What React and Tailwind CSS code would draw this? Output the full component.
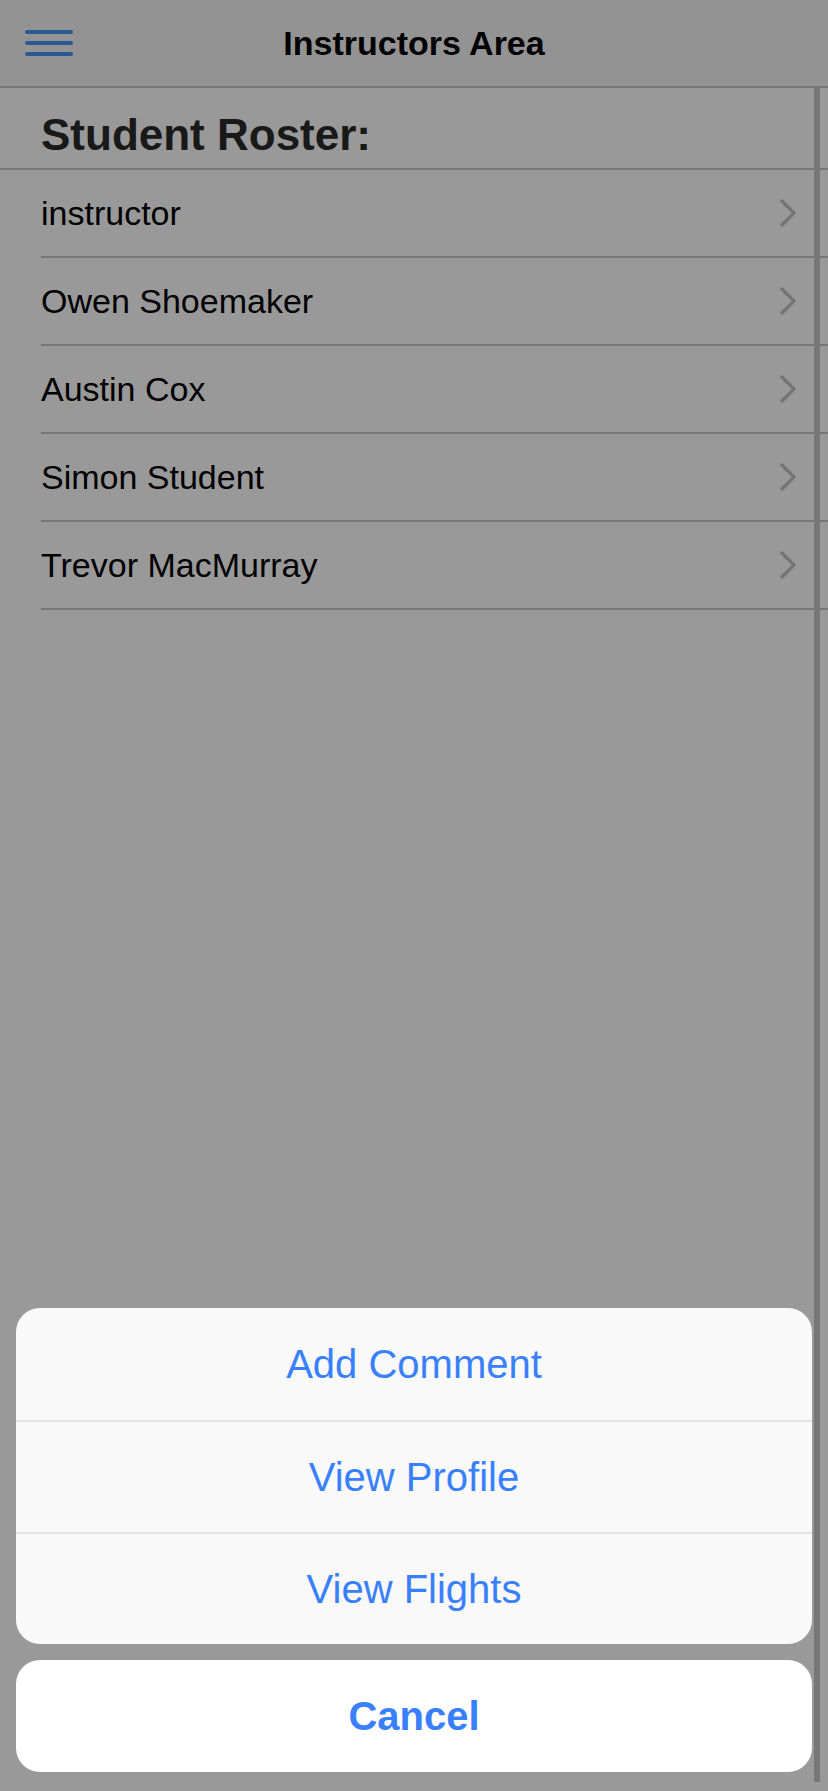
import React from 'react';

const STUDENTS = ['instructor', 'Owen Shoemaker', 'Austin Cox', 'Simon Student', 'Trevor MacMurray'];

const ACTIONS = ['Add Comment', 'View Profile', 'View Flights'];

function Chevron() {
  return (
    <svg width="16" height="28" viewBox="0 0 16 28" fill="none">
      <polyline points="2,2 14,14 2,26" stroke="#c4c4c4" strokeWidth="3.5" strokeLinecap="round" strokeLinejoin="round" />
    </svg>
  );
}

function MenuIcon() {
  return (
    <svg width="48" height="28" viewBox="0 0 48 28" fill="none">
      <line x1="2" y1="3" x2="46" y2="3" stroke="#4a94fa" strokeWidth="4" strokeLinecap="round" />
      <line x1="2" y1="14" x2="46" y2="14" stroke="#4a94fa" strokeWidth="4" strokeLinecap="round" />
      <line x1="2" y1="25" x2="46" y2="25" stroke="#4a94fa" strokeWidth="4" strokeLinecap="round" />
    </svg>
  );
}

export default function App() {
  return (
    <div className="relative w-[828px] h-[1791px] overflow-hidden bg-white font-['Liberation_Sans',Arial,sans-serif] text-black">
      {/* toolbar */}
      <header className="relative h-[88px] bg-[#f6f6f6] border-b-2 border-[#c6c6c6] flex items-center justify-center">
        <button className="absolute left-[25px] top-[29px]">
          <MenuIcon />
        </button>
        <h1 className="text-[34px] font-bold">Instructors Area</h1>
      </header>

      {/* content */}
      <div className="h-[82px] border-b-2 border-[#c6c6c6] pl-[41px] pt-[25px]">
        <h2 className="text-[44px] leading-[44px] font-bold text-[#2a2a2a]">Student Roster:</h2>
      </div>
      <ul>
        {STUDENTS.map((name) => (
          <li key={name} className="ml-[41px] h-[88px] border-b-2 border-[#c6c6c6] flex items-center justify-between pr-[32px]">
            <span className="text-[34px]">{name}</span>
            <Chevron />
          </li>
        ))}
      </ul>

      {/* pane edge */}
      <div className="absolute left-[814px] top-[88px] bottom-[9px] w-[6px] bg-[#c6c6c6]" />

      {/* backdrop */}
      <div className="absolute inset-0 bg-black/40" />

      {/* action sheet */}
      <div className="absolute left-[16px] right-[16px] bottom-0 pb-[19px] flex flex-col gap-[16px]">
        <div className="rounded-[24px] bg-[#f9f9f9] overflow-hidden">
          {ACTIONS.map((a, i) => (
            <button
              key={a}
              className={
                i === 0
                  ? 'w-full h-[112px] flex items-center justify-center text-[40px] text-[#3880ff]'
                  : 'w-full h-[112px] flex items-center justify-center text-[40px] text-[#3880ff] border-t-2 border-[#e2e2e2]'
              }
            >
              {a}
            </button>
          ))}
        </div>
        <button className="w-full h-[112px] rounded-[24px] bg-white flex items-center justify-center text-[40px] font-bold text-[#3880ff]">
          Cancel
        </button>
      </div>
    </div>
  );
}
